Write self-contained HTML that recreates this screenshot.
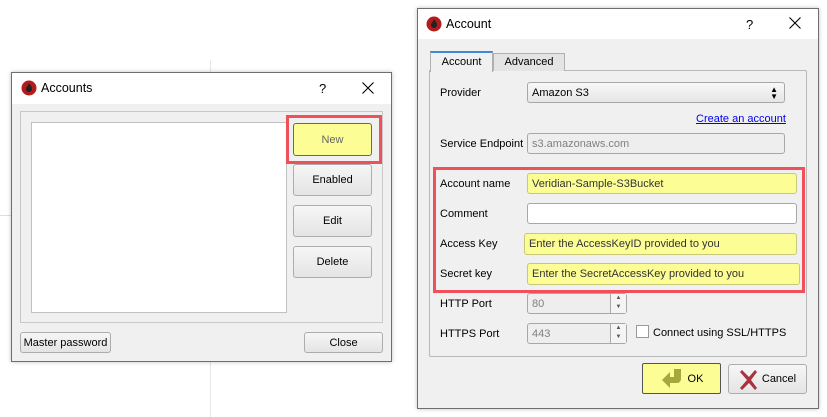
<!DOCTYPE html>
<html><head><meta charset="utf-8"><style>
*{box-sizing:border-box;margin:0;padding:0}
body{width:827px;height:417px;background:#fff;position:relative;overflow:hidden;font-family:"Liberation Sans",sans-serif;font-size:11px;color:#000;white-space:nowrap}
.a{position:absolute}
.dlg{background:#f0f0f0;border:1px solid #6e6e6e;box-shadow:0 0 4px rgba(0,0,0,.25)}
.tb{background:#fff;left:0;right:0;top:0}
.btn{position:absolute;border:1px solid #adadad;border-radius:3px;background:linear-gradient(#f6f6f6,#e4e4e4);display:flex;align-items:center;justify-content:center}
.fld{position:absolute;border:1px solid #a8a8a8;border-radius:3px;background:#fff;padding-left:4px;display:flex;align-items:center}
.dis{background:#eeeeee;color:#808080}
.yel{background:#fdfd96;border-color:#c8c87a;color:#333}
.lbl{position:absolute;left:22px}
.red{position:absolute;border:3px solid #f0505a}
.spin{position:absolute;width:16px;border-left:1px solid #aaa;right:0;top:0;bottom:0;background:#f4f4f4;font-size:6px;line-height:9px;text-align:center;color:#555}
</style></head><body>
<div class="a" style="left:210px;top:60px;width:1px;height:357px;background:#e6e6e6"></div>
<div class="a" style="left:0;top:215px;width:11px;height:1px;background:#ddd"></div>

<!-- Left dialog -->
<div class="a dlg" style="left:11px;top:72px;width:381px;height:290px">
 <div class="a tb" style="height:31px">
  <svg class="a" style="left:9px;top:7px" width="16" height="16" viewBox="0 0 16 16"><circle cx="8" cy="8" r="7.5" fill="#b21c1c"/><path d="M8 3c1 2 3 3 3 6a3 3 0 0 1-6 0c0-2 2-3 3-6z" fill="#222"/></svg>
  <div class="a" style="left:29px;top:8px;font-size:12.5px">Accounts</div>
  <div class="a" style="left:307px;top:8px;font-size:13px">?</div>
  <svg class="a" style="left:350px;top:9px" width="12" height="12" viewBox="0 0 12 12"><path d="M0.5 0.5L11.5 11.5M11.5 0.5L0.5 11.5" stroke="#000" stroke-width="1.1"/></svg>
 </div>
 <div class="a" style="left:8px;top:38px;width:363px;height:212px;border:1px solid #c8c8c8"></div>
 <div class="a" style="left:19px;top:49px;width:256px;height:191px;background:#fff;border:1px solid #c0c0c0"></div>
 <div class="red" style="left:274px;top:42px;width:96px;height:49px"></div>
 <div class="btn" style="left:281px;top:50px;width:79px;height:33px;background:#fdfd96;border-color:#666;color:#666">New</div>
 <div class="btn" style="left:281px;top:91px;width:79px;height:32px">Enabled</div>
 <div class="btn" style="left:281px;top:132px;width:79px;height:32px">Edit</div>
 <div class="btn" style="left:281px;top:173px;width:79px;height:32px">Delete</div>
 <div class="btn" style="left:8px;top:259px;width:91px;height:21px">Master password</div>
 <div class="btn" style="left:292px;top:259px;width:79px;height:21px">Close</div>
</div>

<!-- Right dialog -->
<div class="a dlg" style="left:417px;top:8px;width:402px;height:401px">
 <div class="a tb" style="height:30px">
  <svg class="a" style="left:8px;top:7px" width="16" height="16" viewBox="0 0 16 16"><circle cx="8" cy="8" r="7.5" fill="#b21c1c"/><path d="M8 3c1 2 3 3 3 6a3 3 0 0 1-6 0c0-2 2-3 3-6z" fill="#222"/></svg>
  <div class="a" style="left:28px;top:8px;font-size:12.5px">Account</div>
  <div class="a" style="left:328px;top:8px;font-size:13px">?</div>
  <svg class="a" style="left:371px;top:8px" width="12" height="12" viewBox="0 0 12 12"><path d="M0.5 0.5L11.5 11.5M11.5 0.5L0.5 11.5" stroke="#000" stroke-width="1.1"/></svg>
 </div>
 <div class="a" style="left:11px;top:61px;width:378px;height:287px;border:1px solid #b8b8b8;border-radius:0 2px 2px 2px"></div>
 <div class="a" style="left:75px;top:44px;width:72px;height:18px;border:1px solid #b0b0b0;border-bottom:none;background:#e4e4e4;text-align:center;line-height:17px">Advanced</div>
 <div class="a" style="left:12px;top:42px;width:63px;height:21px;border:1px solid #b0b0b0;border-top:2px solid #3c8ad8;border-bottom:none;background:#f0f0f0;text-align:center;line-height:18px">Account</div>

 <div class="lbl" style="top:78px">Provider</div>
 <div class="fld" style="left:109px;top:73px;width:258px;height:21px;background:linear-gradient(#f8f8f8,#e6e6e6)">Amazon S3<span class="a" style="right:6px;top:3px;font-size:8px;line-height:7px">▲<br>▼</span></div>
 <div class="a" style="left:278px;top:104px;color:#0000ee;text-decoration:underline">Create an account</div>
 <div class="lbl" style="top:129px">Service Endpoint</div>
 <div class="fld dis" style="left:109px;top:124px;width:258px;height:21px">s3.amazonaws.com</div>

 <div class="red" style="left:15px;top:158px;width:372px;height:126px"></div>
 <div class="lbl" style="top:169px">Account name</div>
 <div class="fld yel" style="left:109px;top:164px;width:270px;height:21px">Veridian-Sample-S3Bucket</div>
 <div class="lbl" style="top:199px">Comment</div>
 <div class="fld" style="left:109px;top:194px;width:270px;height:21px"></div>
 <div class="lbl" style="top:229px">Access Key</div>
 <div class="fld yel" style="left:106px;top:224px;width:273px;height:22px">Enter the AccessKeyID provided to you</div>
 <div class="lbl" style="top:259px">Secret key</div>
 <div class="fld yel" style="left:109px;top:254px;width:273px;height:22px">Enter the SecretAccessKey provided to you</div>

 <div class="lbl" style="top:289px">HTTP Port</div>
 <div class="fld dis" style="left:109px;top:284px;width:100px;height:21px">80<div class="spin">▲<br>▼</div></div>
 <div class="lbl" style="top:319px">HTTPS Port</div>
 <div class="fld dis" style="left:109px;top:314px;width:100px;height:21px">443<div class="spin">▲<br>▼</div></div>
 <div class="a" style="left:218px;top:316px;width:13px;height:13px;border:1px solid #999;background:#fff"></div>
 <div class="a" style="left:235px;top:318px">Connect using SSL/HTTPS</div>

 <div class="btn" style="left:224px;top:354px;width:79px;height:31px;background:#fdfd96;border-color:#555;border-radius:2px">
  <svg width="26" height="24" viewBox="0 0 26 24" style="margin-right:2px"><path d="M14 2h7v10a4 4 0 0 1-4 4H10v5L2 13l8-8v5h4z" fill="#a7a83c"/></svg>OK</div>
 <div class="btn" style="left:310px;top:355px;width:79px;height:30px">
  <svg width="20" height="22" viewBox="0 0 20 22" style="margin-right:3px"><path d="M3 2l7 7 6-7 2 2-6 8 6 8-2 2-6-7-7 7-2-2 7-8-7-8z" fill="#a8323e"/></svg>Cancel</div>
</div>
</body></html>
